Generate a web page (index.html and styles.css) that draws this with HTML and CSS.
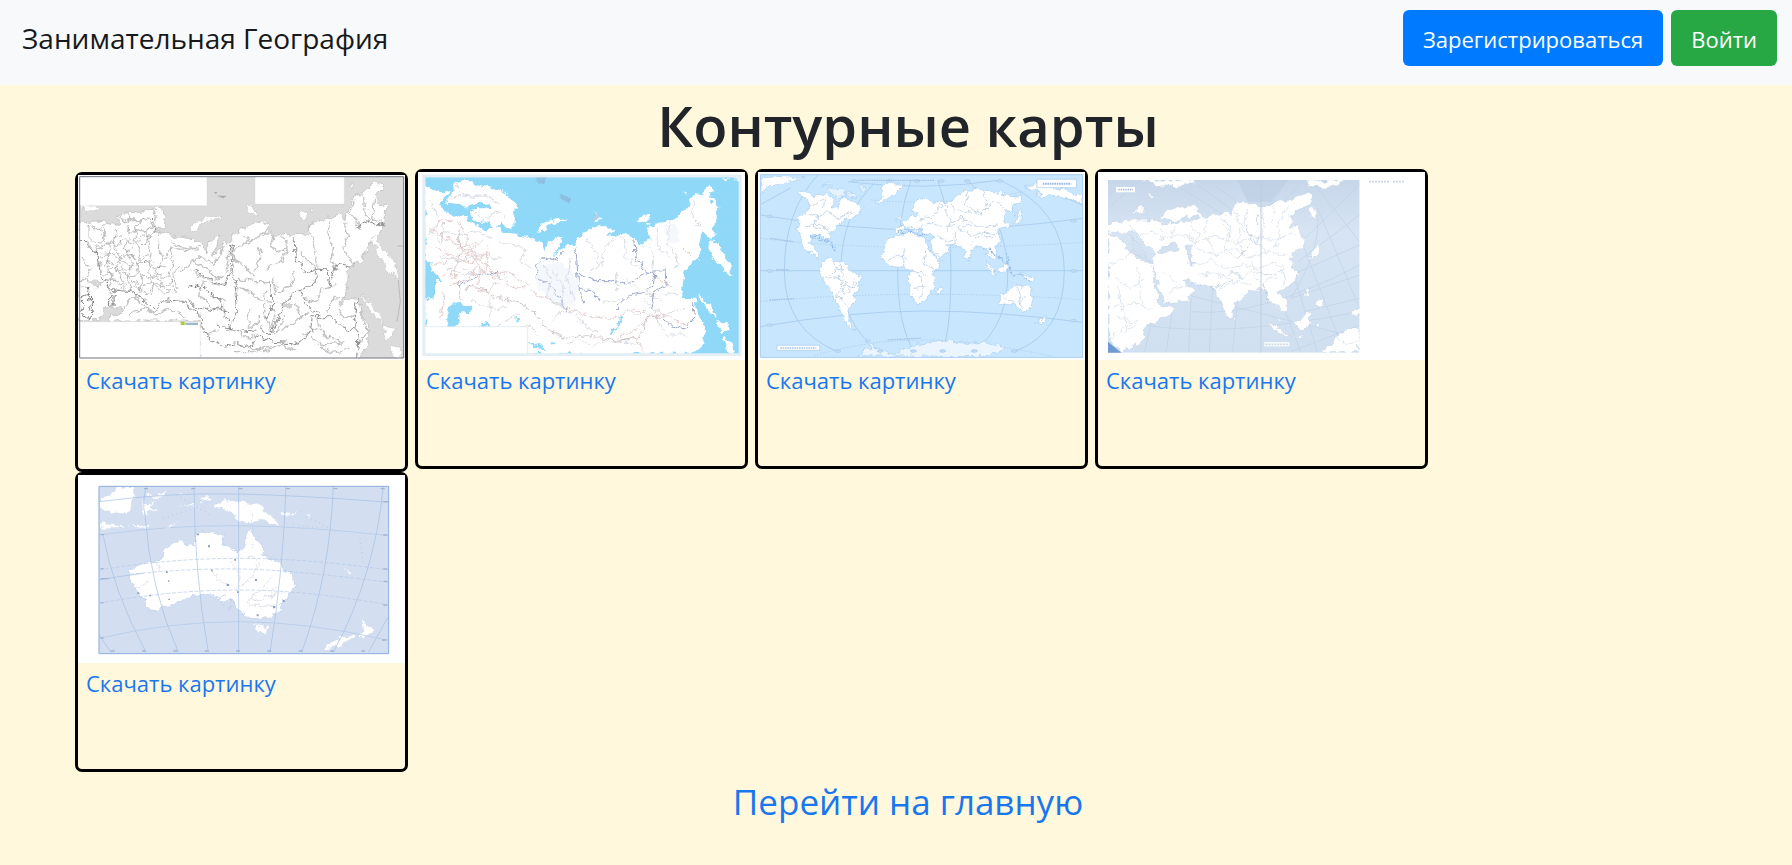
FILE: index.html
```html
<!DOCTYPE html>
<html lang="ru">
<head>
<meta charset="utf-8">
<meta name="viewport" content="width=device-width, initial-scale=1">
<title>Занимательная География</title>
<link rel="stylesheet" href="styles.css">
</head>
<body>
<svg class="defs" width="0" height="0" aria-hidden="true">
  <filter id="rough" x="0" y="0" width="100%" height="100%" color-interpolation-filters="sRGB">
    <feTurbulence type="fractalNoise" baseFrequency="0.045" numOctaves="3" seed="4" result="n"/>
    <feDisplacementMap in="SourceGraphic" in2="n" scale="26" xChannelSelector="R" yChannelSelector="G"/>
  </filter>
</svg>
<header class="navbar">
  <a class="brand" href="#">Занимательная География</a>
  <div class="actions">
    <button class="btn btn-primary" type="button">Зарегистрироваться</button>
    <button class="btn btn-success" type="button">Войти</button>
  </div>
</header>
<main class="content">
  <h1 class="title">Контурные карты</h1>
  <div class="cards">
    <article class="card">
      <svg class="map" viewBox="24 30 981 555" preserveAspectRatio="none" role="img" aria-label="Контурная карта России">
        <path fill="#fff" d="M24 30h981v555H24z"/>
        <path fill="#dbdbdb" d="M29 35h971v544H29z"/>
        <g filter="url(#rough)">
          <path fill="#fff" stroke="#b4b4b4" stroke-width="2" d="M20 170L75 168 110 176 150 178 145 152 165 138 200 140 240 136 262 125 282 130 284 160 284 188 264 195 255 180 250 200 290 205 300 222 330 213 370 225 395 237 410 264 430 214 447 208 440 245 425 275 450 255 462 225 472 240 480 232 488 207 530 185 560 170 598 178 600 200 580 212 640 210 680 205 715 210 720 180 760 165 800 150 825 160 840 115 870 85 895 70 920 50 942 68 915 90 925 115 947 125 945 170 925 208 907 225 890 255 875 290 850 300 832 318 828 375 808 422 835 402 865 398 872 440 895 480 897 535 860 592 385 592 385 468 120 468 122 450 158 445 155 428 100 428 88 467 20 467 20 345 60 350 85 375 95 350 20 345z"/>
          <path fill="#fff" stroke="#c4c4c4" stroke-width="2" d="M904 215L922 210 925 240 950 262 975 290 987 338 950 315 928 280zM875 390L915 430 942 472 915 458 890 420zM940 483L976 490 970 512 948 528zM958 540L982 546 995 579 968 579zM368 200L364 180 400 160 455 152 455 160 405 170 385 184 380 198zM530 118L545 120 552 140 565 150 550 152 532 138zM682 150L700 140 718 150 700 162zM715 136L732 136 725 146zM838 60L848 60 846 72zM30 122L75 122 95 128 70 138 40 132z"/>
          <g fill="none" stroke="#c2c2c2" stroke-width="4">
            <path d="M145 150l20 20 25-10 20 12 20-14 18 22-20 20-24-6-22 14-16-20M175 145l10 22 30-2M250 130l12 25-5 30M30 280l30 30-12 30M50 230l20 30 30-10M280 280l30-30 50 5 30-12M300 225l30 20 60 8M330 320l40-30 10-15 30 5 20 15 22-20 8-35M370 290l40 20 30 30 28-20 10-60M370 320l30 20 45 20 25-5M490 260l30-25 50-20 30-30M490 280l25 15 40 40M520 210l25 20M560 240l15 30-20 50M590 310l40-20 25-45M610 210l-8 30 20 20 30-10M640 215l15 40-20 40M690 260l30 30 20 25M720 180l10 60 15 70M780 170l-8 40 20 30-10 45 20 30M820 170l15 40-15 40 30 50M850 110l-10 30 35 50M880 90l5 55 20 30M915 100l-10 60 30 10M500 340l50 10 50 0M500 370l30 5 40 35 30 5M590 380l-10 60 20 50 20-20M540 430l-5 60 30-10 0-30M610 340l10 45 40-20 20-50M640 420l40 0 10 40 30-20M700 400l40 10 10-40 50-10M740 460l20 50 60 20M770 440l20-40 40-5M800 430l20 30 30-10M720 520l40 20 60-10M640 490l50-30M400 350l-8 40 30 40 40 10M420 390l50 20M430 530l-20-20 40-15M530 545l50 15 60-20 40 20M180 450l40-20 40 20 40-20 50 30M160 430l30-40 25 20 20 30M872 440l20 60-30 40M600 420l15 40-10 40 20 0 20-50M700 510l40-20 30 20M750 545l40 20 50-20M500 500l40 20 30-15M490 560l60 0 50-15"/>
          </g>
          <g fill="none" stroke="#9b9b9b" stroke-width="2">
            <path d="M60 175l10 20 30-5 5 30-25 20-20-20zM80 250l40-20 20 15 25-25 30 15 25-25 30 5M90 270l35-5 22 15 25-12 30 20 30-15 25 20M85 300l30-12 25 20 20-22 35 18 25-14 30 20 35-5M90 325l40 5 22-15 22 20 40-10 22 15 30-12 30 10M95 350l35-8 30 20 28-18 20 22 40-14 30 15 30-20M120 380l30-15 28 12 25-10 28 22 20-30 30 25 40-14M105 180l-5 40 22 30-15 50 20 35-10 50M140 195l-12 40 25 40-15 40 22 40M170 180l10 40-15 30 20 45-12 40 15 40M205 170l-10 50 20 40-16 40 20 35-10 45M240 180l-12 40 15 45-10 50 20 40-10 40M270 200l-5 50 12 40-20 30 25 55M300 250l10 40-15 40 25 50M330 300l-20 35 15 35M110 285l15 20-10 20 22 20M150 290l10 25 30 0M180 270l22 20 0 30M130 310l15 0 8 30M210 290l25 5M150 230l20 30 20-10M125 220l30-8"/>
            <path stroke="#7c7c7c" stroke-width="3" d="M30 400l25-12 20 20-22 20 25 15-20 20-25-20 12-30zM35 360l22 5-8 30 20 12-5 45M122 385v38h10v-36z"/>
          </g>
          <g fill="none" stroke="#8c8c8c" stroke-width="3">
            <path d="M30 215l55 60 5 50 35 50 60 5 30 18 42 38 20-32 60 5 30 22 25 20 5 40 20 30 50 22 35-8 40 15 20-38 50 20 60 5 30-12 20-30 5-40 55 0 35 30 35 10 15 20-5 50-10 40M490 235l-2 85 10 60 5 60-30 60M485 240l-5 80-15 45-60-30-40-25M672 215l3 60 30 45 45-8 25 8 3 50M740 318l-5 35-60 30-40 40-15 55-20 30-30-20M778 360l25-65 48 10M855 190l40-20 50 10M360 370l30-10 20 15 35 25 30 70 5 30M250 160l5 40-40 40M600 350l8 70-20 40M440 480l60 20 60-5M690 380l20 40 40 30M865 400l-15 60 10 40M430 430l50 10M350 400l30 30 50 10 30-20"/>
          </g>
        </g>
        <path fill="#aaa" d="M430 80l12 2-4 5zM440 92l30 0-10 8z"/>
        <path fill="none" stroke="#aaa" stroke-width="2" d="M982 243h18M985 345l6 65-10 60"/>
        <path fill="#fff" stroke="#cfcfcf" d="M29 35h382v87H29zM555 35h268v82H555zM29 470h362v109H29z"/>
        <path fill="#a9c940" d="M332 470h12v10h-12z"/><path fill="#9fb8cc" d="M346 473h38v7h-38z"/>
        <path fill="#fff" d="M24 580h981v5H24z"/>
        <path fill="none" stroke="#73777e" stroke-width="3" d="M29 35h972v544H29z"/>
      </svg>
      <a class="download" href="#">Скачать картинку</a>
    </article>
    <article class="card">
      <svg class="map" viewBox="24 21 981 564" preserveAspectRatio="none" role="img" aria-label="Карта России с реками">
        <path fill="#fff" d="M24 21h981v564H24z"/>
        <path fill="#e3eef5" d="M38 29h956v544H38z"/>
        <path fill="#8fd8f7" d="M46 37h942v530H46z"/>
        <g filter="url(#rough)">
          <path fill="#fff" d="M46 60L65 75 95 80 120 75 115 90 92 102 98 130 130 155 160 150 185 172 200 180 232 200 245 180 190 165 180 140 200 130 245 130 240 115 190 118 170 128 135 120 105 108 125 85 130 60 160 45 210 60 270 75 315 110 310 190 288 185 275 170 260 190 290 210 350 215 395 235 405 262 430 220 458 210 445 250 430 275 470 240 492 240 520 200 580 180 608 195 590 215 660 208 690 235 715 225 715 190 760 170 805 160 825 130 845 100 880 80 895 58 912 70 900 100 925 125 915 185 905 220 880 200 870 235 870 280 845 295 825 315 812 400 858 398 860 440 882 480 880 535 845 566 46 567 46 400 75 400 75 345 95 345 65 320 46 315z"/>
          <path fill="#fff" d="M905 218L935 255 965 310 965 332 915 290 898 250zM862 385L905 425 918 460 895 440zM922 468L960 475 955 495 932 500zM940 515L965 530 972 566 950 560zM385 205L388 180 420 165 470 160 465 168 415 178 398 200zM682 160L720 150 720 158 695 172zM705 175L722 175 718 182zM548 135L575 165 560 168zM820 75L830 75 826 88zM935 40h22l-8 8zM965 37h20v10z"/>
          <path fill="#8bafd0" opacity=".6" d="M445 92l35 0-6 18-20-2zM370 40h45l-10 14zM550 140l22 20-14 4z"/>
          <path fill="#8fd8f7" d="M108 485L118 430 145 410 185 425 180 445 150 440 145 485zM46 285L65 295 60 325 100 345 75 340 72 395 46 400zM598 505L622 485 628 448 636 460 628 488 606 508zM205 478L235 470 240 482 215 486zM352 530L405 548 408 556 370 545zM420 530l20 5-8 8zM315 462l16 0-8 8z"/>
          <g fill="none" stroke="#d9dce4" stroke-width="3">
            <path d="M195 140l30 20 40-20 20 25M60 110l25 50-20 40 30 40M120 100l40-10 60 0 50 25M140 60l20 30 90 10M270 230l50 10 35 15M350 250l-20 40 35 15M400 300l25 50-20 40 50 30M430 320l30 40-8 50M480 280l-10 60 25 60M530 220l30 40 10 40-30 20M610 220l-30 40-5 50M640 220l10 60 40 30M700 240l30 30-5 45M740 190l10 60 30 30M780 170l-10 60 30 40 0 40M850 110l0 50 30 30M530 370l50 45 50-10M620 320l0 60M720 340l-10 50 50 20M640 430l50 20 20-20M700 400l60 50 60-20M500 450l30 40 40 10M430 470l20-30 50 0M740 460l30 50 60 0M550 540l60-15 80 15M310 500l50-20 30 30M100 200l40 10 60-10 50 20M90 270l60 20 60-20 60 10M110 310l50 20 60-10 70 20M190 400l40 30 60 0M250 500l30-30 50-20M470 540l40-20 30 20M640 340l40 30M760 380l40 10"/>
          </g>
          <g fill="none" stroke="#e4d0cf" stroke-width="3">
            <path d="M60 190l60 40 60 30 40-40M80 250l50 25 50-15 60 10M70 300l60-20 50 10 50-20M100 330l50-40 40-30M180 260l-10-50-30-40M180 260l30 50 50 30M180 260l-40 40-10 50M190 265l60 60 50 0 60 40M200 300l-20 40-60 20M230 240l0 60-30 60M140 220l20 40 30 20M240 310l60 50 50 10M270 350l-40 30-60-15M360 380l50 20 60 30 60 20 80 10 60-30 70 30M620 520l60-30 60-50 90 40M820 250l40 40M730 330l60 40M240 400l0 60M700 560l-20-40-50 10M100 380l-10 80M60 210l20-40 50 0M145 250l60-20M160 310l40 20"/>
          </g>
          <g fill="none" stroke="#b9aeb3" stroke-width="2"><path d="M150 170l-5 50 10 40-20 50-15 25M100 180l-5 50M145 350l5 55M160 375l30-12 30 10 20 20 50 10 50 15 30 20 30 40 20 22 50 20 50-10 60 10 50 12 40-10 30-20 10-40 45-10"/></g>
          <g fill="none" stroke="#98a5c8" stroke-width="3"><path d="M378 340l5-40 25-25 30 12 20-25M380 342l40 20 30 40 20 40M498 250l5 70 5 60 15 40M504 325l40 22 60 0 45 10 65-35 20-5M672 225l3 50 30 42 30 5-5 35-30 25-45 12-40 38M508 372l40 10 20 30M755 455l30 28 40 12 22-30 5-50M145 360l60-28 60-10M735 318l30 0 3 40-35 20-10 50"/></g>
          <path fill="#dce4f3" opacity=".3" d="M380 300l60-10 60 40 0 80-50 20-70-70zM760 180l40 0 10 60-40-10z"/>
        </g>
        <path fill="#fff" stroke="#dae3ea" stroke-width="2" d="M41 485h311v86H41z"/>
        <path fill="none" stroke="#e3eef5" stroke-width="8" d="M42 33h948v536H42z"/>
      </svg>
      <a class="download" href="#">Скачать картинку</a>
    </article>
    <article class="card">
      <svg class="map" viewBox="21 21 981 564" preserveAspectRatio="none" role="img" aria-label="Контурная карта мира">
        <path fill="#fff" d="M21 21h981v564H21z"/>
        <path fill="#c8e6fd" stroke="#a9cdf1" stroke-width="3" d="M28 29h967v548H28z"/>
        <g fill="none" stroke="#9fc4ea" stroke-width="2">
          <path d="M200 30Q100 140 100 317T260 560M370 55Q270 150 270 317T390 560M480 45Q440 150 440 317T490 560M560 45Q600 150 600 317T575 560M650 45Q765 160 770 317T670 560M745 45Q940 130 940 317T790 560M28 150Q300 195 520 195T995 160M28 317H995M28 485Q300 438 520 438T995 472M290 50Q520 80 750 45M30 118l90-50M995 120l-120-50"/>
          <path stroke-dasharray="4 5" d="M28 220Q260 247 520 247T995 232M28 410Q260 388 520 388T995 404M360 105Q600 125 820 80M190 572Q350 525 510 525T910 575"/>
        </g>
        <g filter="url(#rough)" fill="#fff" stroke="#a9cdf0" stroke-width="2">
          <path d="M140 85L165 78 185 88 230 90 250 105 240 125 262 130 270 95 300 105 330 130 325 150 290 160 255 185 235 215 222 228 220 214 185 215 178 230 192 250 205 265 202 280 180 270 155 245 148 210 138 195 148 150 175 130 165 100zM215 290L240 280 290 300 292 318 335 335 325 365 312 400 295 435 290 455 300 485 312 498 290 485 270 440 255 400 225 360 210 330zM405 235L430 208 480 205 520 215 535 255 550 280 577 285 545 330 550 355 530 400 505 418 490 405 472 350 475 320 455 305 415 300 392 275zM428 190L450 188 455 170 485 155 505 148 480 135 500 105 530 98 550 115 600 110 640 75 700 75 760 90 815 95 810 115 780 125 790 150 760 130 770 185 740 200 755 230 730 245 740 270 728 282 705 262 690 240 665 250 655 292 635 250 610 238 590 240 600 260 555 278 535 225 550 210 520 205 510 190 495 200 470 190 435 208zM745 385L780 370 800 358 815 365 830 358 848 395 840 425 812 442 790 420 745 415zM372 118L395 85 385 65 400 55 460 58 430 90zM560 365l10-5-2 28-10 2zM845 478l45-28-10 18-30 10zM735 318l35-22-5 30zM805 328l45 8-5 10-25-5zM705 285l30 40-5 10-20-30zM790 180l12-20-4-20 12 0 0 30zM440 165l10-15 4 15zM820 65L890 60 935 72 995 95 995 118 950 100 895 92 855 103 870 80zM30 38L90 35 158 38 120 50 60 62 30 80z"/>
          <path fill="#eaf5ff" d="M315 572L360 550 350 525 370 548 430 565 480 545 540 530 580 525 640 535 700 532 760 545 750 562 700 575z"/>
          <path fill="#e5f3ff" d="M225 70l50 0 10 20-30 5zM285 85l30 0 10 14-30-2zM210 60l30-5 5 8zM315 65l35-5-12 18z"/>
        </g>
        <g filter="url(#rough)" fill="none" stroke="#a8c0da" stroke-width="2">
          <path d="M170 145l30 5 25-10 45 20 35-20M200 150l-10 40 45 0M225 100l-15 30M160 185l55-5 25 20M175 130l40-25M245 285l10 30-20 20M265 300l20 50-25 40 30 40M220 340l40-5 40 30 20-10M255 310l30 10M280 390l-15-60M295 380l15-40M415 285l25-15 30 15M455 300l5-50M520 260l5 40 30 20M475 320l40 0 20 20M490 370l40-5M505 330l15 40-15 30M535 255l30 15M440 190l30-5 30 10 30-20 50 10 50-5 60 10 50-10M500 165l30-10 20 20M540 150l30-20-10-25M580 120l15 30-5 50M600 110l10 25 50 10 20-20M650 80l-10 40 50 30 30-30M700 80l10 40 30-10 20 15M590 170l40-10 50 20M620 190l40 20 40-8 50 5M610 235l0-35M660 235l30-25 30 10M750 390l40 25M800 365l10 60M820 390l-10 25M560 210l30 20 20-5"/>
          <path stroke="#8fb7e3" stroke-width="4" stroke-dasharray="5 3" d="M440 200l40 5 50 0M180 215l45 10 30 30M700 250l50 30 30 40 60 25M765 270l15 50"/>
        </g>
        <g fill="#fff" stroke="#a6c8ec" stroke-width="2">
          <path d="M858 43h118v25H858zM78 541h128v15H78z"/>
          <g fill="#c2dcf5"><ellipse cx="56" cy="154" rx="9" ry="4"/><ellipse cx="56" cy="318" rx="9" ry="4"/><ellipse cx="56" cy="480" rx="9" ry="4"/><ellipse cx="968" cy="167" rx="9" ry="4"/><ellipse cx="968" cy="318" rx="9" ry="4"/><ellipse cx="968" cy="467" rx="9" ry="4"/><ellipse cx="260" cy="558" rx="9" ry="4"/><ellipse cx="388" cy="558" rx="9" ry="4"/><ellipse cx="487" cy="558" rx="9" ry="4"/><ellipse cx="575" cy="558" rx="9" ry="4"/><ellipse cx="670" cy="558" rx="9" ry="4"/><ellipse cx="790" cy="558" rx="9" ry="4"/><ellipse cx="310" cy="48" rx="9" ry="4"/><ellipse cx="415" cy="48" rx="9" ry="4"/><ellipse cx="498" cy="48" rx="9" ry="4"/><ellipse cx="571" cy="48" rx="9" ry="4"/><ellipse cx="649" cy="48" rx="9" ry="4"/><ellipse cx="746" cy="48" rx="9" ry="4"/></g>
        </g>
        <path fill="none" stroke="#9dbce0" stroke-width="6" stroke-dasharray="5 2" d="M875 56h86"/>
        <path fill="none" stroke="#a9c4e6" stroke-width="4" stroke-dasharray="5 2" d="M88 549h108M58 220l70 10M75 314h38M55 405l75-4M410 525l100-6M320 46h230"/>
      </svg>
      <a class="download" href="#">Скачать картинку</a>
    </article>
    <article class="card">
      <svg class="map" viewBox="21 21 981 564" preserveAspectRatio="none" role="img" aria-label="Контурная карта Евразии">
        <defs>
          <linearGradient id="sea" x2="0" y2="1"><stop offset="0" stop-color="#c7d7ea"/><stop offset=".3" stop-color="#d6e4f3"/><stop offset="1" stop-color="#d0e0f1"/></linearGradient>
        </defs>
        <path fill="#fff" d="M21 21h981v564H21z"/>
        <path fill="url(#sea)" d="M51 45h755v518H51z"/>
        <path fill="#b9c9df" opacity=".5" d="M440 45h150l-50 65h-70z"/>
        <g fill="none" stroke="#c0d2e7" stroke-width="2">
          <path d="M51 130L150 45M51 90L110 45M230 45L400 150M300 45L430 140M350 45L450 120M590 45L540 120M640 45L560 130M806 60L600 260M806 150L620 290M806 240L580 340M806 330L600 400M806 400L640 440M660 45L806 230M680 130L806 430M640 250L760 563M600 300L680 563M560 380L630 563M440 400L425 563M365 370L355 563M300 400L293 563M245 430L225 563M200 390L160 563M51 330L806 520M160 480Q400 520 806 440M300 440Q500 460 806 300M600 560L806 480M51 230L200 300M680 150Q690 250 600 400"/>
        </g>
        <g filter="url(#rough)" fill="#fff" stroke="#c6d5e7" stroke-width="2">
          <path d="M51 180L70 168 95 175 120 165 200 165 215 180 270 170 325 165 320 150 290 155 245 175 205 160 230 135 290 122 320 130 335 155 400 145 420 150 430 120 450 108 490 120 530 125 550 110 600 105 640 85 660 82 660 118 630 130 600 150 600 190 620 185 640 215 635 245 600 265 605 310 622 325 615 355 570 370 560 385 590 405 588 430 570 438 545 410 530 412 530 385 505 370 485 380 460 385 435 420 418 460 405 450 385 395 365 370 310 355 290 345 270 340 285 360 318 375 290 405 222 412 205 370 185 300 200 390 210 425 250 430 235 450 160 490 160 520 130 537 95 563 51 530 51 205 110 235 105 250 145 285 180 290 190 270 170 240 150 225 130 200 90 205 51 200z"/>
          <path d="M150 45L300 45 315 55 270 65 200 62zM645 45L760 45 745 60 700 70 655 60zM690 563L730 520 790 485 806 500 806 563zM612 480L650 440 662 455 645 490 620 490zM522 470L550 480 592 510 575 510zM545 450l30 22-5 5zM650 138L665 125 680 160 660 155zM655 290L665 262 680 235 682 265zM645 375l8 0 0 25-8-5zM675 415l20-12 5 20-18 3zM675 470l20 10-5 8-12-6zM595 510l50 4-20 4zM425 457l10 5-3 10zM780 438l26-8v25l-22-8zM120 140l30-12 20 4-25 8zM170 85l22 4-10 8z"/>
          <path fill="#d3e1f1" d="M195 262L215 245 255 235 262 250 235 262zM285 240L300 245 300 280 312 300 295 300zM112 215l30 20 28 45-40-25z"/>
        </g>
        <g filter="url(#rough)" fill="none" stroke="#ced9e5" stroke-width="2">
          <path d="M120 180l20 30 40-10 30 20 60-10 50 20 50-15 60 20 60-20 60 10 60-20M210 190l10 30M250 180l-10 50M300 170l20 40-10 40M350 160l-10 50 30 50M390 170l25 30-15 50 40 30M430 130l20 50-10 50 20 40M470 130l-15 60 40 40 15-30M510 130l10 60-20 40 20 30M550 120l-10 50 30 40-20 40M590 120l-30 70M320 250l50 20 60-20 40 30 60-20 60 10M310 300l50-15 40 25 50-10 50 10 60-20M330 330l50-5 50 25 50-30M390 370l50-20 40 10M480 290l20 60 60-10M550 300l30 10 0 50M510 350l20 30M70 340l50 30 40-30M60 300l80-50M70 430l50-15 50 10M80 460l60 10M100 500l40-30M80 370l30 130M140 300l10 120 30 20M220 320l60 50M230 380l70-20M55 520l70-50M740 520l30 20 30-10"/>
          <path stroke="#b3c5d8" d="M395 155l25 40-5 40M470 180l0 30 30 25 15-25M500 180l0-30M480 240l-40 40M385 340l40-18 30 15M500 320l50 10 30-12M520 355l10 60M370 385l-5-15 50-20"/>
        </g>
        <path fill="none" stroke="#fff" stroke-width="24" d="M39 33h779v542H39z"/>
        <path stroke="#c2ccdb" stroke-width="3" d="M510 45v518"/>
        <path fill="#6f9bd0" d="M51 530l40 33H51z"/>
        <path fill="#fff" d="M75 66h57v16H75zM520 532h75v12h-75z"/>
        <path fill="none" stroke="#9fb8d8" stroke-width="5" stroke-dasharray="4 3" d="M82 74h44"/>
        <path fill="none" stroke="#ccd7e6" stroke-width="5" stroke-dasharray="6 3" d="M834 50h60M906 50h36M523 538h70"/>
      </svg>
      <a class="download" href="#">Скачать картинку</a>
    </article>
    <article class="card">
      <svg class="map" viewBox="24 30 981 564" preserveAspectRatio="none" role="img" aria-label="Контурная карта Австралии">
        <path fill="#fff" d="M24 30h981v564H24z"/>
        <path fill="#d3dff1" d="M87 64h869v502H87z"/>
        <g filter="url(#rough)" fill="#fff">
          <path stroke="#b9cce6" stroke-width="2" d="M175 322L200 305 270 285 275 265 315 228 345 228 350 240 370 240 380 210 410 198 440 205 460 205 455 235 480 250 510 260 525 245 530 210 543 190 555 220 575 235 580 270 620 290 640 315 668 330 672 365 645 405 615 450 570 460 525 455 505 430 485 400 462 418 445 405 440 390 400 388 345 400 320 415 275 430 240 440 225 430 230 410 205 385z"/>
          <path d="M90 100L115 95 140 68 188 66 192 100 180 138 120 140 92 132zM430 122L470 105 510 110 560 120 600 145 630 185 600 175 565 165 530 175 505 160 480 138zM385 98l30-4 10 10-30 4zM210 108l20 10 28-14-20 20 24 18-28-5-8 16-6-20zM232 92l45-5 15-8-12 14-46 3zM90 178l60 2 8 6-68 2zM165 184l70-2-5 6zM282 186l38-12-28 14zM635 145l28 2 14-14-10 18-30 2zM315 122l60-2-4 4zM555 480l12 6 26-4-8 18-14 2-10-8zM763 550L800 525 848 512 850 520 815 535 790 553 768 555zM868 512L878 490 875 458 888 485 912 495 885 515zM818 302l30 26-8-2zM708 148l14 8-6 2zM328 78l10 8-10 2z"/>
          <path fill="none" stroke="#bdd0ea" stroke-width="4" d="M480 400l15 15-25 15M445 390l20-5 5 12"/>
        </g>
        <g fill="none" stroke="#a3bee2" stroke-width="2">
          <path d="M87 110Q300 82 506 87T956 112M87 345Q140 335 220 325M506 64V566M230 64Q215 110 225 150M372 64Q372 320 415 562M648 64Q640 320 600 562M790 64Q780 330 695 562M940 64Q915 330 790 562M225 150Q240 370 325 562M98 205Q130 380 228 562M87 510l36 52M955 455L895 562"/>
          <path stroke="#b1c6e5" d="M87 210Q300 180 506 182T956 212M87 520Q300 470 506 470T956 526"/>
          <path stroke="#b1c6e5" stroke-dasharray="12 5" d="M87 315Q300 280 506 280T956 315M87 415Q300 375 506 375T956 420M180 328Q350 310 506 312T956 352"/>
        </g>
        <g filter="url(#rough)" fill="none" stroke="#d1d5de" stroke-width="2"><path d="M530 410l40-30 20-30 15-15M530 415l40 10 40-5M540 400l30 10 30-20 45-10M575 290l-30 50-40 30M480 290l30 30-10 50M535 230l20 20M200 370l40-20M260 290l10 30M540 140l5 30M425 316l30 35 30 10M535 280l30 0-10 40M600 400l20-40"/></g>
        <g fill="#8c9dbb"><path d="M414 241h6v6h-6zM493 282h5v5h-5zM423 314h5v5h-5zM555 342h6v6h-6zM470 357h7v6h-7zM501 379h5v5h-5zM638 405h6v6h-6zM609 423h7v7h-7zM560 448h6v6h-6zM202 382h6v5h-6zM238 389h5v5h-5zM288 319h5v5h-5zM294 346h4v4h-4zM295 401h5v4h-5zM380 206h7v5h-7z"/></g>
        <g fill="none" stroke="#a2b6d3" stroke-width="4"><path stroke-dasharray="12 82" d="M122 558h830"/><path stroke-dasharray="12 130" d="M222 71h730"/><path d="M92 209h10M92 311h9M92 341h24M92 413h9M92 519h9M940 110h14M940 210h12M940 312h12M940 349h12M940 420h12M936 525h14"/></g>
        <g fill="none" stroke="#b9cae4" stroke-width="5"><path stroke-dasharray="2 12" d="M710 155l100 50M670 180l110 10M870 220l10 80M320 90l100 60M280 160l90-30"/></g>
        <path fill="none" stroke="#8baedb" stroke-width="3" d="M87 64h869v502H87z"/>
      </svg>
      <a class="download" href="#">Скачать картинку</a>
    </article>
  </div>
  <a class="home" href="#">Перейти на главную</a>
</main>
</body>
</html>
```

FILE: styles.css
```css
* { box-sizing: border-box; }

body {
  margin: 0;
  background: #fff8dc;
  color: #212529;
  font-family: "Segoe UI", "Open Sans", "Noto Sans", sans-serif;
  font-size: 22px;
  line-height: 36px;
}

a { color: #1877ee; text-decoration: none; }

.defs { position: absolute; }

.navbar {
  display: flex;
  align-items: flex-start;
  justify-content: space-between;
  min-height: 85px;
  padding: 10px 15px 10px 22px;
  background: #f8f9fa;
}

.brand {
  color: #16181b;
  font-size: 28px;
  line-height: 56px;
}

.actions { display: flex; gap: 8px; }

.btn {
  height: 56px;
  padding: 2px 20px 0;
  border: 0;
  border-radius: 6px;
  color: #fff;
  font: inherit;
}

.btn-primary { background: #007bff; }
.btn-success { background: #28a745; }

.content {
  display: flex;
  flex-direction: column;
  padding: 4px 51px 40px 75px;
}

.title {
  margin: 0 0 8px;
  font-size: 56px;
  font-weight: 600;
  line-height: 72px;
  text-align: center;
}

.cards {
  display: grid;
  grid-template-columns: repeat(auto-fill, 333px);
  align-items: start;
  column-gap: 7px;
}

.card {
  display: flex;
  flex-direction: column;
  align-items: flex-start;
  min-height: 300px;
  border: 3px solid #000;
  border-radius: 7px;
}

.card:first-child { margin-top: 3px; }

.map {
  display: block;
  width: 100%;
  height: 188px;
}

.card:first-child .map { height: 185px; }

.download { padding: 2px 8px; }

.home {
  align-self: center;
  margin-top: 2px;
  font-size: 35px;
  line-height: 56px;
}
```
